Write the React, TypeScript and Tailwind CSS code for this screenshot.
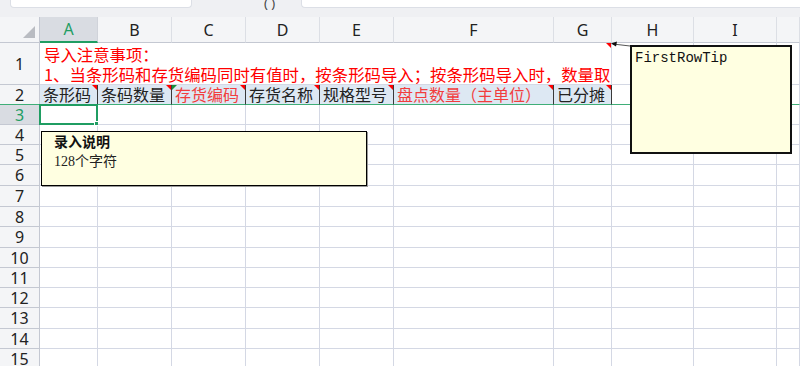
import React from 'react';

type Col = { key: string; w: string };

const cols: Col[] = [
  { key: 'A', w: 'w-[58px]' },
  { key: 'B', w: 'w-[74px]' },
  { key: 'C', w: 'w-[74px]' },
  { key: 'D', w: 'w-[74px]' },
  { key: 'E', w: 'w-[74px]' },
  { key: 'F', w: 'w-[160px]' },
  { key: 'G', w: 'w-[58px]' },
  { key: 'H', w: 'w-[82px]' },
  { key: 'I', w: 'w-[83px]' },
  { key: '', w: 'w-[23px]' },
];

const headers = [
  { text: '条形码', red: false },
  { text: '条码数量', red: false },
  { text: '存货编码', red: true, green: true },
  { text: '存货名称', red: false },
  { text: '规格型号', red: false },
  { text: '盘点数量（主单位）', red: true },
  { text: '已分摊', red: false },
];

// rows 4..15
const rowHeights = ['h-[20px]', 'h-[20px]', 'h-[21px]', 'h-[21px]', 'h-[20px]', 'h-[21px]', 'h-[20px]', 'h-[20px]', 'h-[20px]', 'h-[21px]', 'h-[20px]', 'h-[20px]'];

const uiFont = "font-['Noto_Sans','Noto_Sans_CJK_SC',sans-serif]";
const cellFont = "font-['Noto_Sans_CJK_SC','Noto_Sans',sans-serif]";

function RowHead({ n, h, active }: { n: number; h: string; active?: boolean }) {
  return (
    <div
      className={
        'flex w-[40px] shrink-0 items-center justify-center border-r border-b border-[#c4c8d2] text-[16px] ' +
        h +
        ' ' +
        uiFont +
        (active ? ' bg-[#d9dce2] text-[#1f9d62]' : ' bg-[#f4f5f7] text-[#222]')
      }
    >
      {n}
    </div>
  );
}

function RedMark() {
  return <div className="absolute top-0 right-0 h-0 w-0 border-t-[5px] border-l-[5px] border-t-[#ff0000] border-l-transparent" />;
}

export default function App() {
  return (
    <div className="relative h-[366px] w-[800px] overflow-hidden bg-white">
      {/* top strip */}
      <div className="flex h-[17px] items-start bg-[#eff0f3]">
        <div className="ml-[10px] h-[8px] w-[182px] rounded-b-[4px] border-x border-b border-[#dcdfe6] bg-white" />
        <div className={'ml-[72px] -mt-[6px] text-[13px] text-[#444] ' + uiFont}>( )</div>
        <div className="ml-[26px] h-[8px] flex-1 rounded-bl-[4px] border-b border-l border-[#dcdfe6] bg-white" />
      </div>

      {/* column headers */}
      <div className="flex h-[26px]">
        <div className="relative flex w-[40px] shrink-0 items-end justify-end border-r border-b border-[#c4c8d2] bg-[#f4f5f7] p-[4px]">
          <div className="h-0 w-0 border-b-[12px] border-l-[12px] border-b-[#b9bcc2] border-l-transparent" />
        </div>
        {cols.map((c, i) => (
          <div
            key={i}
            className={
              'flex shrink-0 items-center justify-center text-[16px] ' +
              c.w +
              ' ' +
              uiFont +
              (i === 0
                ? ' border-r border-b-2 border-r-[#d0d3da] border-b-[#1f9d62] bg-[#d9dce2] text-[#1f9d62]'
                : ' border-r border-b border-r-[#dcdfe5] border-b-[#c4c8d2] bg-[#f4f5f7] text-[#222]')
            }
          >
            {c.key}
          </div>
        ))}
      </div>

      {/* row 1 */}
      <div className="flex h-[42px]">
        <RowHead n={1} h="h-[42px]" />
        <div className={'relative w-[572px] shrink-0 overflow-hidden border-r border-b border-[#d4d8e4] pl-[4px] pt-[1px] text-[16.4px] leading-[20px] whitespace-nowrap text-[#ff0000] ' + cellFont}>
          <div>导入注意事项：</div>
          <div>1、当条形码和存货编码同时有值时，按条形码导入；按条形码导入时，数量取</div>
          <RedMark />
        </div>
        {cols.slice(7).map((c, i) => (
          <div key={i} className={'shrink-0 border-r border-b border-[#d4d8e4] ' + c.w} />
        ))}
      </div>

      {/* row 2 */}
      <div className="flex h-[20px]">
        <div className={'flex h-[20px] w-[40px] shrink-0 items-center justify-center border-r border-b border-r-[#c4c8d2] border-b-[#3fae78] bg-[#f4f5f7] text-[16px] text-[#222] ' + uiFont}>
          2
        </div>
        {cols.map((c, i) => {
          const hd = headers[i];
          if (!hd) {
            return <div key={i} className={'shrink-0 border-r border-b border-r-[#d4d8e4] border-b-[#3fae78] ' + c.w} />;
          }
          return (
            <div
              key={i}
              className={
                'relative shrink-0 overflow-hidden border-r border-b border-r-[#3a3a3a] border-b-[#3fae78] bg-[#dde8f3] pl-[3px] text-[16px] leading-[19px] whitespace-nowrap ' +
                c.w +
                ' ' +
                cellFont +
                (hd.red ? ' text-[#f23d3d]' : ' text-[#222]')
              }
            >
              {hd.text}
              <RedMark />
              {hd.green && (
                <div className="absolute top-0 left-0 h-0 w-0 border-t-[5px] border-r-[5px] border-t-[#1a8f3c] border-r-transparent" />
              )}
            </div>
          );
        })}
      </div>

      {/* row 3 */}
      <div className="flex h-[20px]">
        <RowHead n={3} h="h-[20px]" active />
        {cols.map((c, i) => (
          <div key={i} className={'relative shrink-0 border-r border-b border-[#d4d8e4] ' + c.w}>
            {i === 0 && (
              <div className="absolute -top-[1px] -left-[1px] h-[21px] w-[59px] border-2 border-[#1f9d62]">
                <div className="absolute -right-[3px] -bottom-[3px] h-[5px] w-[5px] border border-white bg-[#1f9d62]" />
              </div>
            )}
          </div>
        ))}
      </div>

      {/* rows 4..15 */}
      {rowHeights.map((h, r) => (
        <div key={r} className={'flex ' + h}>
          <RowHead n={r + 4} h={h} />
          {cols.map((c, i) => (
            <div key={i} className={'shrink-0 border-r border-b border-[#d4d8e4] ' + c.w + ' ' + h} />
          ))}
        </div>
      ))}

      {/* comment on A3 */}
      <div className="absolute top-[131px] left-[41px] h-[55px] w-[326px] border border-black bg-[#ffffe1] pt-[2px] pl-[12px] shadow-[1px_1px_0_#9a9a9a]">
        <div className={"text-[14px] leading-[18px] font-bold text-[#111] font-['Liberation_Serif','Noto_Sans_CJK_SC',serif]"}>录入说明</div>
        <div className={"text-[14px] leading-[20px] text-[#222] font-['Liberation_Serif','Noto_Sans_CJK_SC',serif]"}>128个字符</div>
      </div>

      {/* comment on G1 */}
      <svg className="absolute top-[40px] left-[608px]" width="26" height="10" viewBox="0 0 26 10">
        <line x1="22" y1="6" x2="5" y2="4" stroke="#555" strokeWidth="1" />
        <polygon points="3,3.5 9,1.5 8,6.5" fill="#111" />
      </svg>
      <div className="absolute top-[45px] left-[630px] h-[109px] w-[162px] border-2 border-[#111] bg-[#ffffe1] pt-[2px] pl-[3px]">
        <div className={"text-[14px] leading-[18px] text-[#111] font-['Liberation_Mono',monospace]"}>FirstRowTip</div>
      </div>
    </div>
  );
}
